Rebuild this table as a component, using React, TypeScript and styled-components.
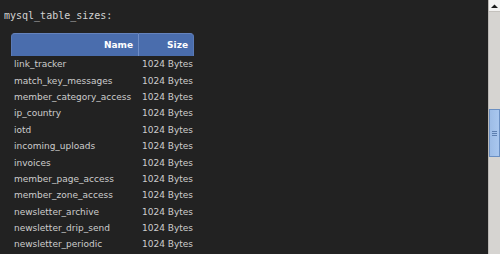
import React from 'react';
import styled, { createGlobalStyle } from 'styled-components';

const GlobalStyle = createGlobalStyle`
  html, body {
    margin: 0;
    padding: 0;
    background: #222222;
    overflow: hidden;
  }
`;

const Window = styled.div`
  display: flex;
  width: 500px;
  height: 254px;
  background: #222222;
  overflow: hidden;
`;

const Content = styled.div`
  flex: 1;
  padding: 9px 0 0 4px;
`;

const Title = styled.div`
  font-family: 'DejaVu Sans Mono', monospace;
  font-size: 10px;
  line-height: 14px;
  color: #d2d2d2;
  margin-bottom: 10px;
`;

const Table = styled.table`
  margin-left: 7px;
  width: 183px;
  table-layout: fixed;
  border-collapse: separate;
  border-spacing: 0;
  font-family: 'DejaVu Sans', Verdana, sans-serif;
  font-size: 9px;
`;

const HeadCell = styled.th<{ $first?: boolean }>`
  box-sizing: border-box;
  height: 23px;
  padding: 0 5px 0 0;
  text-align: right;
  font-weight: bold;
  color: #ffffff;
  background: #4a6dad;
  border-top: 1px solid #6583bd;
  border-left: ${(p) => (p.$first ? '1px solid #5a7ab6' : '1px solid #6f8dc6')};
  border-right: ${(p) => (p.$first ? 'none' : '1px solid #5a7ab6')};
  border-radius: ${(p) => (p.$first ? '4px 0 0 0' : '0 4px 0 0')};
  width: ${(p) => (p.$first ? '127px' : '56px')};
`;

const Cell = styled.td<{ $size?: boolean }>`
  height: 16.4px;
  padding: 0 0 0 ${(p) => (p.$size ? '4px' : '3px')};
  color: #cdcdcd;
  white-space: nowrap;
  overflow: visible;
  vertical-align: middle;
`;

const Scrollbar = styled.div`
  width: 12px;
  height: 254px;
  display: flex;
  flex-direction: column;
  background: #d6d4d1;
  border-left: 1px solid #bdbab6;
  box-sizing: border-box;
  position: relative;
`;

const UpButton = styled.div`
  height: 11px;
  background: #f3f2f1;
  border-bottom: 1px solid #c4c1bd;
  display: flex;
  align-items: center;
  justify-content: center;
`;

const Thumb = styled.div`
  position: absolute;
  left: 0;
  right: 0;
  top: 109px;
  height: 48px;
  background: linear-gradient(90deg, #9dbce6, #a9c7ef);
  border: 1px solid #6a8fc2;
  box-sizing: border-box;
  display: flex;
  flex-direction: column;
  align-items: center;
  justify-content: center;
  gap: 1px;
`;

const Grip = styled.div`
  width: 5px;
  height: 1px;
  background: #5d7fb0;
`;

const rows = [
  'link_tracker',
  'match_key_messages',
  'member_category_access',
  'ip_country',
  'iotd',
  'incoming_uploads',
  'invoices',
  'member_page_access',
  'member_zone_access',
  'newsletter_archive',
  'newsletter_drip_send',
  'newsletter_periodic',
];

export default function App() {
  return (
    <Window>
      <GlobalStyle />
      <Content>
        <Title>mysql_table_sizes:</Title>
        <Table>
          <thead>
            <tr>
              <HeadCell $first>Name</HeadCell>
              <HeadCell>Size</HeadCell>
            </tr>
          </thead>
          <tbody>
            {rows.map((name) => (
              <tr key={name}>
                <Cell>{name}</Cell>
                <Cell $size>1024 Bytes</Cell>
              </tr>
            ))}
          </tbody>
        </Table>
      </Content>
      <Scrollbar>
        <UpButton>
          <svg width="7" height="4" viewBox="0 0 7 4">
            <path d="M0 4 L3.5 0.5 L7 4 Z" fill="#1a1a1a" />
          </svg>
        </UpButton>
        <Thumb>
          <Grip />
          <Grip />
          <Grip />
        </Thumb>
      </Scrollbar>
    </Window>
  );
}
